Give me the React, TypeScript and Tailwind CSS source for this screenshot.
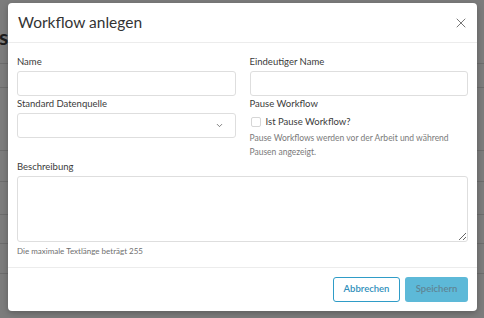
import { X, ChevronDown } from "lucide-react"

function Label({ children }: { children: React.ReactNode }) {
  return <div className="h-[12px] text-[9.5px] leading-[12px] text-[#3a3a3a]">{children}</div>
}

function TextInput() {
  return <div className="mt-[3px] h-[25px] rounded-[3px] border border-[#dedede] bg-white" />
}

export default function App() {
  const rows = [63, 87, 150, 181, 214, 243, 273, 290]

  return (
    <div
      className="relative h-[318px] w-[484px] overflow-hidden bg-[#7c7c7c]"
      style={{ fontFamily: "Lato, 'Open Sans', sans-serif" }}
    >
      {/* page behind the overlay */}
      <div className="flex flex-col">
        <div className="h-[63px] pt-[23px] text-[21px] font-bold leading-[28px] text-[#1c1c1c]">
          <span className="ml-[-1px]">s</span>
        </div>
        {rows.slice(1).map((y, i) => (
          <div
            key={y}
            className="border-t border-[#6c6c6c]"
            style={{ height: y - rows[i] }}
          />
        ))}
      </div>

      {/* modal */}
      <div className="absolute left-[8px] top-[3px] flex h-[308px] w-[469px] flex-col rounded-[4px] bg-white shadow-[0_2px_6px_rgba(0,0,0,0.25)]">
        <div className="flex h-[40px] items-center justify-between border-b border-[#ececec] pl-[10px] pr-[8px]">
          <h1 className="text-[15.5px] font-normal text-[#333]">Workflow anlegen</h1>
          <X className="h-[16px] w-[16px] text-[#777]" strokeWidth={1.5} />
        </div>

        <div className="flex flex-1 flex-col px-[9px] pt-[13px]">
          <div className="grid grid-cols-2 gap-x-[14px]">
            <div>
              <Label>Name</Label>
              <TextInput />
              <div className="mt-[2px]">
                <Label>Standard Datenquelle</Label>
              </div>
              <div className="mt-[3px] flex h-[25px] items-center justify-end rounded-[3px] border border-[#dedede] bg-white pr-[11px]">
                <ChevronDown className="h-[9px] w-[9px] text-[#555]" strokeWidth={2} />
              </div>
            </div>
            <div>
              <Label>Eindeutiger Name</Label>
              <TextInput />
              <div className="mt-[2px]">
                <Label>Pause Workflow</Label>
              </div>
              <div className="mt-[7px] flex h-[10px] items-center gap-[5px] pl-[1px]">
                <span className="h-[10px] w-[10px] rounded-[2px] border border-[#d6d6d6] bg-white" />
                <span className="text-[9.5px] text-[#3a3a3a]">Ist Pause Workflow?</span>
              </div>
              <div className="mt-[4px] text-[8.5px] leading-[14px] text-[#7a7a7a]">
                Pause Workflows werden vor der Arbeit und während
                <br />
                Pausen angezeigt.
              </div>
            </div>
          </div>

          <div className="mt-[2px]">
            <Label>Beschreibung</Label>
          </div>
          <textarea className="mt-[3px] h-[66px] w-full resize-y rounded-[3px] border border-[#dedede] bg-white outline-none" />
          <div className="mt-[3px] text-[8px] leading-[12px] text-[#6f6f6f]">
            Die maximale Textlänge beträgt 255
          </div>
        </div>

        <div className="flex h-[44px] items-center justify-end gap-[5px] border-t border-[#ececec] pr-[9px]">
          <button className="h-[25px] w-[67px] rounded-[3px] border-[1.5px] border-[#2f9cc7] bg-white text-[9.5px] font-semibold text-[#2f8fbb]">
            Abbrechen
          </button>
          <button className="h-[25px] w-[63px] rounded-[3px] bg-[#5db9d8] text-[9.5px] font-semibold text-[#5f8595]">
            Speichern
          </button>
        </div>
      </div>
    </div>
  )
}
